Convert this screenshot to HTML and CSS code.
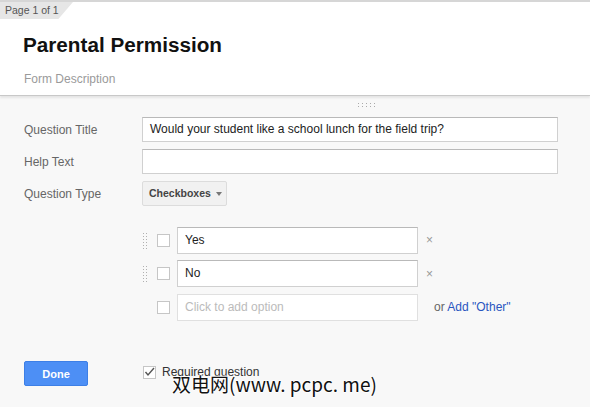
FILE: index.html
```html
<!DOCTYPE html>
<html>
<head>
<meta charset="utf-8">
<link rel="stylesheet" href="styles.css">
</head>
<body>
<div class="page">
  <header class="head">
    <div class="tab">Page 1 of 1</div>
    <h1 class="title">Parental Permission</h1>
    <div class="desc">Form Description</div>
  </header>
  <main class="editor">
    <div class="grip-h">
      <svg width="17" height="4" viewBox="0 0 17 4"><g fill="#aaa"><rect x="0" y="0" width="1" height="1"/><rect x="4" y="0" width="1" height="1"/><rect x="8" y="0" width="1" height="1"/><rect x="12" y="0" width="1" height="1"/><rect x="16" y="0" width="1" height="1"/><rect x="0" y="3" width="1" height="1"/><rect x="4" y="3" width="1" height="1"/><rect x="8" y="3" width="1" height="1"/><rect x="12" y="3" width="1" height="1"/><rect x="16" y="3" width="1" height="1"/></g></svg>
    </div>
    <div class="fields">
      <div class="row">
        <label class="lbl">Question Title</label>
        <div class="inp wide">Would your student like a school lunch for the field trip?</div>
      </div>
      <div class="row">
        <label class="lbl">Help Text</label>
        <div class="inp wide"></div>
      </div>
      <div class="row">
        <label class="lbl">Question Type</label>
        <div class="select">Checkboxes <span class="caret"></span></div>
      </div>
    </div>
    <div class="options">
      <div class="opt">
        <span class="grip"></span>
        <span class="cb"></span>
        <div class="inp oinp">Yes</div>
        <span class="x">×</span>
      </div>
      <div class="opt">
        <span class="grip"></span>
        <span class="cb"></span>
        <div class="inp oinp">No</div>
        <span class="x">×</span>
      </div>
      <div class="opt">
        <span class="grip blank"></span>
        <span class="cb"></span>
        <div class="inp oinp ph">Click to add option</div>
        <span class="other">or <a class="link">Add "Other"</a></span>
      </div>
    </div>
    <div class="footer">
      <button class="done">Done</button>
      <div class="req">
        <span class="cb checked"><svg width="11" height="10" viewBox="0 0 11 10"><path d="M1.5 5 L4 8 L10 1" fill="none" stroke="#555" stroke-width="1.4"/></svg></span>
        <span class="req-text">Required question</span>
      </div>
    </div>
  </main>
  <div class="watermark">双电网(www. pcpc. me)</div>
</div>
</body>
</html>
```

FILE: styles.css
```css
* { box-sizing: border-box; }
html, body { margin: 0; padding: 0; }
body {
  width: 590px;
  height: 407px;
  overflow: hidden;
  font-family: "Liberation Sans", Arial, sans-serif;
  background: #f8f8f8;
}
.page { position: relative; height: 407px; }

.head {
  background: #fff;
  border-top: 2px solid #d6d6d6;
  height: 96px;
  border-bottom: 1px solid #c8c8c8;
  box-shadow: 0 2px 2px rgba(0,0,0,0.08);
}
.tab {
  width: 73px;
  height: 17px;
  background: #e6e6e6;
  clip-path: polygon(0 0, 100% 0, 80% 100%, 0 100%);
  font-size: 10.5px;
  color: #555;
  line-height: 17px;
  padding-left: 5px;
}
.title {
  margin: 14px 0 0 23px;
  font-size: 20.7px;
  font-weight: bold;
  color: #111;
  line-height: 24px;
}
.desc {
  margin: 15px 0 0 24px;
  font-size: 12px;
  color: #9a9a9a;
  line-height: 14px;
}

.grip-h {
  display: flex;
  padding: 7px 0 0 358px;
  height: 13px;
}
.grip-h svg { display: block; }

.fields {
  display: flex;
  flex-direction: column;
  gap: 7px;
  margin-top: 8px;
}
.row {
  display: flex;
  align-items: center;
}
.lbl {
  width: 142px;
  padding-left: 24px;
  font-size: 12px;
  color: #666;
}
.inp {
  height: 25px;
  background: #fff;
  border: 1px solid #d0d0d0;
  border-top-color: #b9b9b9;
  font-size: 12px;
  color: #222;
  line-height: 23px;
  padding-left: 7px;
}
.wide { width: 416px; }
.select {
  height: 25px;
  width: 85px;
  background: #f1f1f1;
  border: 1px solid #dcdcdc;
  border-radius: 2px;
  font-size: 10.5px;
  font-weight: bold;
  color: #444;
  line-height: 23px;
  padding-left: 6px;
  display: flex;
  align-items: center;
  gap: 5px;
}
.caret {
  width: 0; height: 0;
  border-left: 3px solid transparent;
  border-right: 3px solid transparent;
  border-top: 4px solid #777;
}

.options {
  display: flex;
  flex-direction: column;
  gap: 7.5px;
  margin-top: 21px;
  padding-left: 142px;
}
.opt {
  display: flex;
  align-items: center;
  height: 26px;
}
.grip {
  width: 7px;
  height: 17px;
  margin-right: 8px;
  background-image: radial-gradient(circle, #b0b0b0 0.8px, transparent 1px);
  background-size: 3px 3px;
}
.grip.blank { background: none; }
.cb {
  width: 13px;
  height: 13px;
  border: 1px solid #c6c6c6;
  background: #fff;
  margin-right: 7px;
  display: inline-flex;
  align-items: center;
  justify-content: center;
}
.oinp {
  width: 241px;
  height: 27px;
  line-height: 25px;
}
.ph { color: #bbb; border-color: #e0e0e0; }
.x {
  margin-left: 8px;
  font-size: 12px;
  color: #999;
}
.other {
  margin-left: 16px;
  font-size: 12px;
  color: #666;
}
.link { color: #2a55c0; }

.footer {
  display: flex;
  align-items: center;
  margin-top: 41px;
  padding-left: 24px;
}
.done {
  width: 64px;
  height: 25px;
  background: #4d8ff5;
  border: 1px solid #3d7fe6;
  border-radius: 2px;
  color: #fff;
  font-family: "Liberation Sans", Arial, sans-serif;
  font-weight: bold;
  font-size: 11px;
  padding: 0;
}
.req {
  display: flex;
  align-items: center;
  margin-left: 55px;
  margin-top: -3px;
}
.req .cb { margin-right: 6px; }
.req-text { font-size: 12px; color: #333; }

.watermark {
  position: absolute;
  left: 172px;
  top: 370px;
  font-family: "Noto Sans CJK SC", sans-serif;
  font-size: 19px;
  color: #111;
  white-space: nowrap;
  text-shadow: 1px 0 #fff, -1px 0 #fff, 0 1px #fff, 0 -1px #fff;
}
```
